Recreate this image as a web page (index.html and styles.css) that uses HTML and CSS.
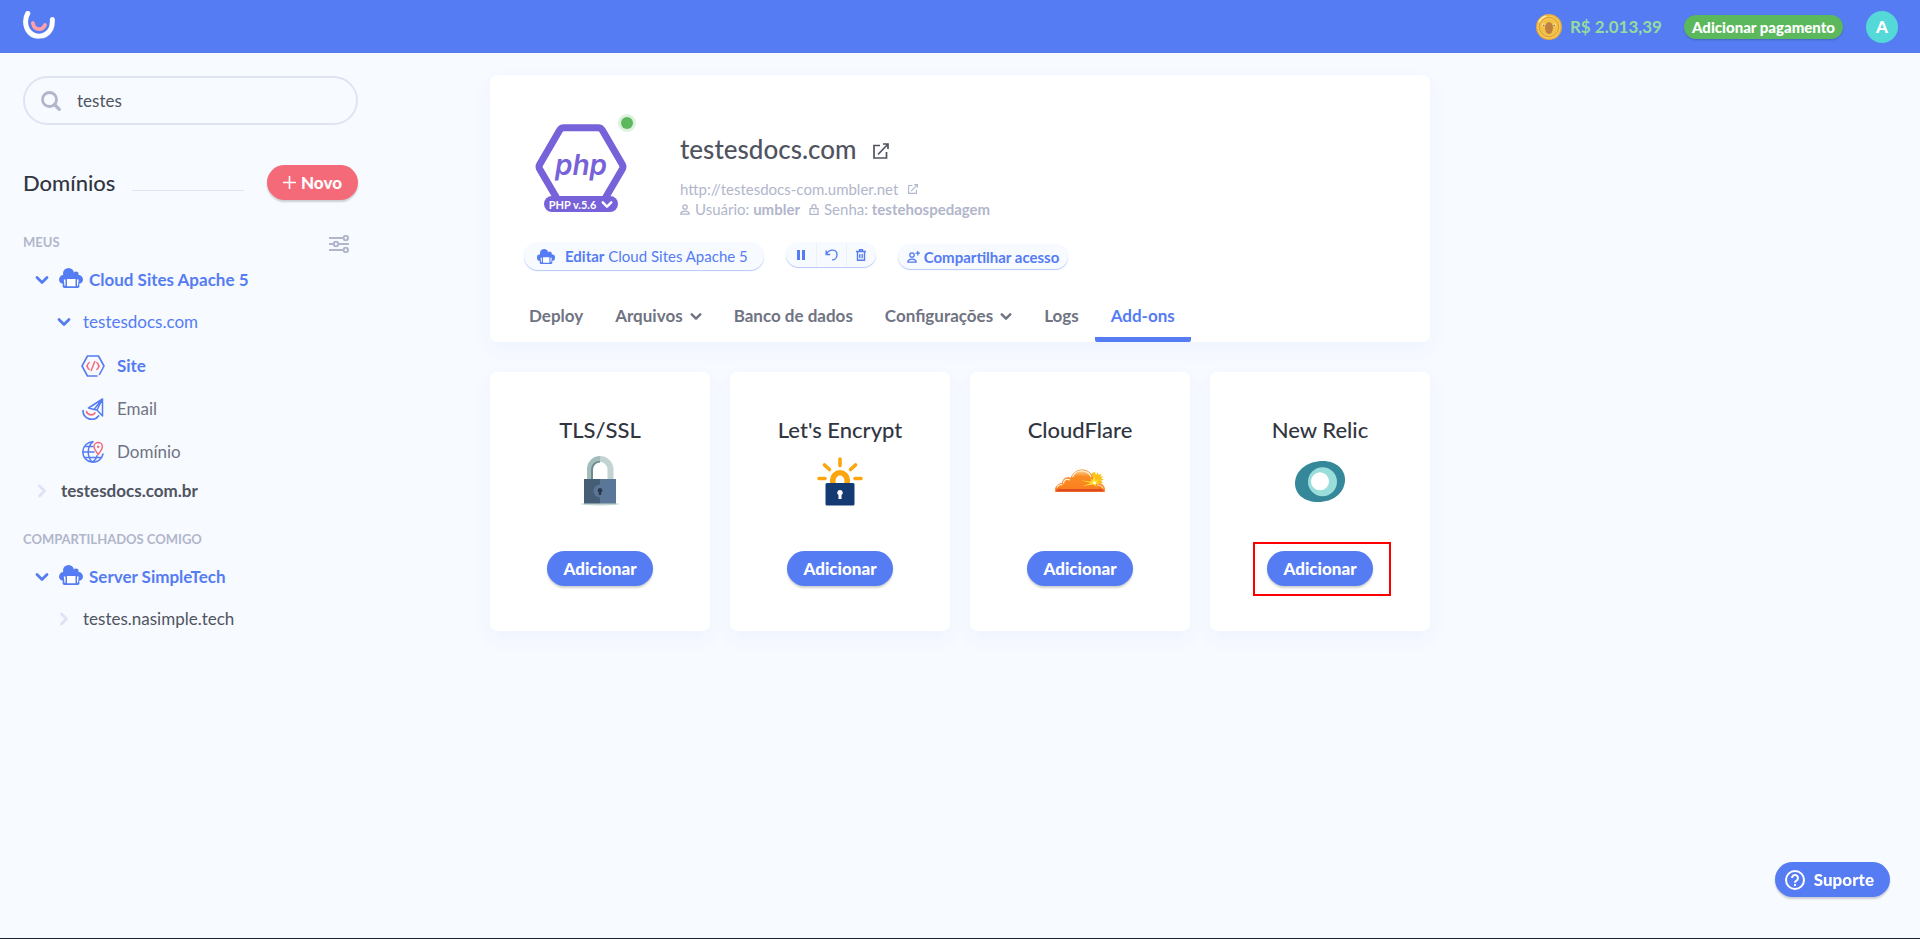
FILE: index.html
```html
<!DOCTYPE html>
<html lang="pt-BR">
<head>
    <meta charset="UTF-8">
    <meta name="viewport" content="width=device-width, initial-scale=1.0">
    <title>testesdocs.com - Add-ons</title>

    <link rel="stylesheet" href="styles.css">
</head>
<body>

    <!-- icones usados mais de uma vez -->
    <svg class="sprite" aria-hidden="true">
        <symbol id="ic-down" viewBox="0 0 14 10">
            <path d="M2 2.500l5 5 5-5" fill="none" stroke="currentColor" stroke-width="2.800" stroke-linecap="round" stroke-linejoin="round"/>
        </symbol>
        <symbol id="ic-right" viewBox="0 0 10 14">
            <path d="M2.500 2l5 5-5 5" fill="none" stroke="currentColor" stroke-width="2.800" stroke-linecap="round" stroke-linejoin="round"/>
        </symbol>
        <symbol id="ic-server" viewBox="0 0 24 20">
            <g fill="currentColor">
                <circle cx="9.500" cy="5.500" r="5.500"/>
                <circle cx="17" cy="6" r="2.600"/>
                <circle cx="4.400" cy="11.500" r="4.400"/>
                <circle cx="19.600" cy="11.500" r="4.400"/>
                <path d="M4 7h16v8.500L20.500 18a2 2 0 0 1-2 2h-13a2 2 0 0 1-2-2L4 15.500z"/>
            </g>
            <path fill="#fff" d="M8 11h8.500v7.300H8zM4.800 11.500h1.700v6.300H5.500zM18 11.500h1.700l-.7 6.300h-1z"/>
        </symbol>
        <symbol id="ic-external" viewBox="0 0 16 16">
            <path d="M7 2.500H1v12.500h12.500V9M5 11.500L14.600 1.500M10 1h5v5" fill="none" stroke="currentColor" stroke-width="1.700"/>
        </symbol>
    </svg>

    <header class="topbar">
        <a class="logo" href="#" aria-label="Umbler">
            <svg width="32" height="28" viewBox="0 0 32 28">
                <path d="M4.800 2.400C2 7 1.900 13.500 4.200 18c5 9.600 18.500 9.400 23.600 0 1.400-3 1.700-6 1.500-9.500" fill="none" stroke="#fff" stroke-width="5" stroke-linecap="round"/>
                <path d="M9.800 12c.8 4.400 3.400 6.200 6.400 6.200 2.600 0 4.500-1.300 5.800-4.200" fill="none" stroke="#ffa0a8" stroke-width="3.800" stroke-linecap="round"/>
            </svg>
        </a>
        <div class="account">
            <svg class="coin" width="26" height="26" viewBox="0 0 26 26">
                <circle cx="13" cy="13" r="13" fill="#e8ac3c"/>
                <circle cx="13" cy="13" r="11.500" fill="#f7cf57"/>
                <circle cx="13" cy="13" r="9.800" fill="#f2c14a" stroke="#d99a38" stroke-width="1"/>
                <path d="M3 8a11.500 11.500 0 0 1 7-6" fill="none" stroke="#fff0b0" stroke-width="1.500"/>
                <ellipse cx="13" cy="14" rx="4" ry="6" fill="#bf8140"/>
                <circle cx="7.500" cy="11" r="1.400" fill="#fff0b0"/><circle cx="18.500" cy="11" r="1.400" fill="#fff0b0"/>
                <circle cx="7.800" cy="11.400" r=".8" fill="#9a6430"/><circle cx="18.200" cy="11.400" r=".8" fill="#9a6430"/>
            </svg>
            <span class="balance">R$ 2.013,39</span>
            <button class="btn-payment" type="button">Adicionar pagamento</button>
            <button class="avatar" type="button">A</button>
        </div>
    </header>

    <div class="page">

        <aside class="sidebar">
            <div class="search">
                <svg width="20" height="20" viewBox="0 0 20 20">
                    <circle cx="8.500" cy="8.500" r="7" fill="none" stroke="#b1b6cb" stroke-width="2.800"/>
                    <path d="M13.500 13.500l4.800 4.800" stroke="#b1b6cb" stroke-width="3.200" stroke-linecap="round"/>
                </svg>
                <input type="text" value="testes" aria-label="Buscar">
            </div>

            <div class="domains-head">
                <h2>Domínios</h2>
                <span class="line"></span>
                <button class="btn btn-new" type="button">
                    <svg width="13" height="13" viewBox="0 0 13 13"><path d="M6.500 0v13M0 6.500h13" stroke="#fff" stroke-width="1.600"/></svg>
                    Novo
                </button>
            </div>

            <section class="group">
                <div class="group-head">
                    <h3>MEUS</h3>
                    <button class="btn-filter" type="button" aria-label="Filtrar">
                        <svg width="20" height="18" viewBox="0 0 20 18" fill="none" stroke="#b1b6cb" stroke-width="2">
                            <path d="M0 3h14M0 9h4.500M9.500 9H20M0 15h14"/>
                            <circle cx="16.800" cy="3" r="2.200"/><circle cx="7" cy="9" r="2.200"/><circle cx="16.800" cy="15" r="2.200"/>
                        </svg>
                    </button>
                </div>
                <nav>
                    <a class="row server" href="#">
                        <svg class="arrow" width="14" height="10"><use href="#ic-down"/></svg>
                        <svg class="cloud" width="24" height="20"><use href="#ic-server"/></svg>
                        Cloud Sites Apache 5
                    </a>
                    <a class="row site open" href="#">
                        <svg class="arrow" width="14" height="10"><use href="#ic-down"/></svg>
                        testesdocs.com
                    </a>
                    <div class="services">
                        <a class="row service active" href="#">
                            <svg width="24" height="22" viewBox="0 0 24 22" fill="none" stroke-linecap="round" stroke-linejoin="round">
                                <path d="M16 21H6.500L1 11 6.500 1h11L23 11l-4.500 8.500" stroke="#557cf2" stroke-width="1.600"/>
                                <path d="M8.200 7.600C6 8.500 7.500 10 5.800 11c1.700 1 .2 2.500 2.400 3.400M15.800 7.600c2.200.9.7 2.400 2.400 3.400-1.700 1-.2 2.500-2.400 3.400M13.800 6.500L10.200 15.500" stroke="#f56a79" stroke-width="1.500"/>
                            </svg>
                            Site
                        </a>
                        <a class="row service" href="#">
                            <svg width="24" height="22" viewBox="0 0 24 22" fill="none" stroke-linecap="round" stroke-linejoin="round">
                                <path d="M21.500 1L7.500 10l5.500 1.500L21.500 1l-5.500 11 5.500 6zM13 11.500l3 .5" stroke="#557cf2" stroke-width="1.500"/>
                                <path d="M2 12.500c0 9 11 11.500 15.500 5.500" stroke="#557cf2" stroke-width="1.700"/>
                                <path d="M5.500 13.500c1.500 4.500 6.500 4 8.500 1.500" stroke="#f56a79" stroke-width="1.700"/>
                            </svg>
                            Email
                        </a>
                        <a class="row service" href="#">
                            <svg width="24" height="22" viewBox="0 0 24 22" fill="none" stroke-linecap="round" stroke-linejoin="round">
                                <path d="M12 .8A10.200 10.200 0 1 0 22 13M12 .8C6 5 5.500 16 11.500 21.200M11.500 21.200c3-2 4-4.200 4.500-6.500M1.800 11H13M3.300 5.500H12M3.500 16.500h16" stroke="#557cf2" stroke-width="1.500"/>
                                <path d="M17.200 13.500c-2-3-4.200-5-4.200-7.800a4.200 4.200 0 0 1 8.400 0c0 2.800-2.200 4.800-4.200 7.800z" stroke="#f56a79" stroke-width="1.500"/>
                                <circle cx="17.200" cy="5.700" r="1.200" fill="#f56a79"/>
                            </svg>
                            Domínio
                        </a>
                    </div>
                    <a class="row domain" href="#">
                        <svg class="arrow" width="10" height="14"><use href="#ic-right"/></svg>
                        testesdocs.com.br
                    </a>
                </nav>
            </section>

            <section class="group">
                <div class="group-head">
                    <h3>COMPARTILHADOS COMIGO</h3>
                </div>
                <nav>
                    <a class="row server" href="#">
                        <svg class="arrow" width="14" height="10"><use href="#ic-down"/></svg>
                        <svg class="cloud" width="24" height="20"><use href="#ic-server"/></svg>
                        Server SimpleTech
                    </a>
                    <a class="row site" href="#">
                        <svg class="arrow" width="10" height="14"><use href="#ic-right"/></svg>
                        testes.nasimple.tech
                    </a>
                </nav>
            </section>
        </aside>

        <main class="content">

            <section class="panel">
                <div class="site-info">
                    <div class="platform">
                        <svg width="92" height="86" viewBox="0 0 92 86">
                            <path d="M29 3.700h34a5 5 0 0 1 4.400 2.500l19.800 34a5 5 0 0 1 0 5L67.400 79a5 5 0 0 1-4.400 2.500H29a5 5 0 0 1-4.400-2.500L4.800 45.200a5 5 0 0 1 0-5l19.800-34A5 5 0 0 1 29 3.700z" fill="none" stroke="#7762d9" stroke-width="7"/>
                            <text class="php" x="46" y="51" text-anchor="middle">php</text>
                        </svg>
                        <span class="status"></span>
                        <button class="version" type="button">
                            PHP v.5.6
                            <svg width="12" height="9"><use href="#ic-down"/></svg>
                        </button>
                    </div>
                    <div class="details">
                        <h1>
                            testesdocs.com
                            <a href="#" aria-label="Abrir site"><svg width="16" height="16"><use href="#ic-external"/></svg></a>
                        </h1>
                        <a class="url" href="#">
                            http://testesdocs-com.umbler.net
                            <svg width="10" height="10"><use href="#ic-external"/></svg>
                        </a>
                        <p class="credentials">
                            <svg width="10" height="11" viewBox="0 0 10 11" fill="none" stroke="currentColor" stroke-width="1.300"><circle cx="5" cy="3" r="2.200"/><path d="M.8 10.200c0-4 8.400-4 8.400 0z"/></svg>
                            <span>Usuário: <b>umbler</b></span>
                            <svg class="lock" width="10" height="11" viewBox="0 0 10 11" fill="none" stroke="currentColor" stroke-width="1.300"><path d="M1 4.700h8v5.600H1zM3 4.500V2.700a2 2 0 0 1 4 0v1.800M5 6.700v1.500"/></svg>
                            <span>Senha: <b>testehospedagem</b></span>
                        </p>
                    </div>
                </div>

                <div class="actions">
                    <button class="pill edit" type="button">
                        <svg width="18" height="15"><use href="#ic-server"/></svg>
                        <span><b>Editar</b> Cloud Sites Apache 5</span>
                    </button>
                    <div class="pill tools">
                        <button type="button" aria-label="Pausar">
                            <svg width="8" height="10" viewBox="0 0 8 10"><path d="M0 0h3v10H0zM5 0h3v10H5z" fill="currentColor"/></svg>
                        </button>
                        <button type="button" aria-label="Reiniciar">
                            <svg width="13" height="12" viewBox="0 0 13 12" fill="none" stroke="currentColor" stroke-width="1.400"><path d="M1.200 1.500v4h4M1.500 5.300C4-.5 12-.2 12 5.700c0 3-2.200 5.200-5 5.200"/></svg>
                        </button>
                        <button type="button" aria-label="Excluir">
                            <svg width="10" height="12" viewBox="0 0 10 12" fill="none" stroke="currentColor" stroke-width="1.400"><path d="M0 2.500h10M3.500 2V.8h3V2M1.500 3v8.300h7V3M3.800 5v4.300M6.200 5v4.300"/></svg>
                        </button>
                    </div>
                    <button class="pill share" type="button">
                        <svg width="13" height="12" viewBox="0 0 13 12" fill="none" stroke="currentColor" stroke-width="1.300"><circle cx="5" cy="4" r="2.200"/><path d="M.8 11.200c0-4.200 8.400-4.200 8.400 0zM10.800 0v4.400M8.600 2.200H13"/></svg>
                        Compartilhar acesso
                    </button>
                </div>

                <nav class="tabs">
                    <a href="#">Deploy</a>
                    <a href="#">Arquivos <svg width="12" height="9"><use href="#ic-down"/></svg></a>
                    <a href="#">Banco de dados</a>
                    <a href="#">Configurações <svg width="12" height="9"><use href="#ic-down"/></svg></a>
                    <a href="#">Logs</a>
                    <a class="active" href="#">Add-ons</a>
                </nav>
            </section>

            <section class="addons">
                <article class="card">
                    <h2>TLS/SSL</h2>
                    <svg width="50" height="50" viewBox="0 0 50 50">
                        <ellipse cx="25" cy="48" rx="19" ry="1.500" fill="#c3d3d2"/>
                        <path d="M12 24V13.500A13 13 0 0 1 25 0v6a7.500 7.500 0 0 0-7.500 7.500V24z" fill="#a3bcbc"/>
                        <path d="M16 24V13.500A8.500 8.500 0 0 1 25 5v1.500A7 7 0 0 0 18 14v10z" fill="#6d8a8c"/>
                        <path d="M38.500 24V13.500A13.500 13.500 0 0 0 25 0v6a7.500 7.500 0 0 1 7.500 7.500V24z" fill="#c3d3d2"/>
                        <path d="M9 23h16v24.500H9z" fill="#465d76"/>
                        <path d="M25 23h16v24.500H25z" fill="#5b7797"/>
                        <path d="M25 28.500a6.500 6.500 0 0 0 0 13z" fill="#5b7797"/>
                        <path d="M25 32a2.500 2.500 0 0 1 1.200 4.600V39h-2.400v-2.400A2.500 2.500 0 0 1 25 32z" fill="#29394d"/>
                    </svg>
                    <button class="btn" type="button">Adicionar</button>
                </article>
                <article class="card">
                    <h2>Let's Encrypt</h2>
                    <svg width="50" height="50" viewBox="0 0 50 50">
                        <path d="M17.800 28v-4a7.200 7.200 0 0 1 14.400 0v4" fill="none" stroke="#fba50e" stroke-width="5.600"/>
                        <path d="M25 3v6.500M9.500 9l5 4.500M40.500 9l-5 4.500M4 22.500h6M40 22.500h6" stroke="#fba50e" stroke-width="3.600" stroke-linecap="round"/>
                        <rect x="10.500" y="27" width="29" height="22.500" rx="1.500" fill="#143a72"/>
                        <path d="M25 34a2.700 2.700 0 0 1 1.500 5v4h-3v-4A2.700 2.700 0 0 1 25 34z" fill="#fff"/>
                    </svg>
                    <button class="btn" type="button">Adicionar</button>
                </article>
                <article class="card">
                    <h2>CloudFlare</h2>
                    <svg width="50" height="50" viewBox="0 0 50 50">
                        <defs>
                            <linearGradient id="cf-cloud" x1="0" y1="0" x2="0" y2="1">
                                <stop offset="0" stop-color="#ffd9a0"/><stop offset=".3" stop-color="#fb8c24"/><stop offset="1" stop-color="#fb7d1d"/>
                            </linearGradient>
                        </defs>
                        <path d="M40 16l1 3 2-3 .5 3 3-1.500-1 3 3 0-2.500 2 3 1-3 1 2 2.500H34V19l3-1.500 1-1z" fill="#fcc21b"/>
                        <path d="M.5 35.500c-.5-5 2.500-8 7-8 0-5 4.500-7 8.500-5 1.500-6 7-9 12-8.500 6 .5 9 4.500 9.500 8.500.8 2 1.500 4.500 4.500 5 5-1 8 3 7.500 8z" fill="url(#cf-cloud)" stroke="#fb8424" stroke-width="1"/>
                        <path d="M8.500 27.500c0-4 3.500-5 6.500-3.500M17.500 21c2-5 6.500-6.500 10.500-6 4 .4 7 3 8 6" fill="none" stroke="#fff0d2" stroke-width="1.300"/>
                        <path d="M2 31.500c1-2.500 3.500-3 5.500-2.700M42 29c3 0 5 1 6 3.500" fill="none" stroke="#ffe2b5" stroke-width="1.200"/>
                        <path d="M1 35.500c1-4 4-2.500 8-2.500h32c4 0 6-1.500 8 2.500z" fill="#de4a22"/>
                        <path d="M39.500 19.500l.8 5.500 3.700-1.500-2.500 3 5 1-6 .5 1.500 3-3.500-2.500-11 1.500 8.500-3-10-2.500 10.500 1-.8-3.500 2 2z" fill="#ffe22d"/>
                        <circle cx="39.500" cy="27" r="1.400" fill="#fff"/>
                    </svg>
                    <button class="btn" type="button">Adicionar</button>
                </article>
                <article class="card">
                    <h2>New Relic</h2>
                    <svg width="50" height="50" viewBox="0 0 50 50">
                        <path d="M28 5c13 0 22 8.500 22 18.500C50 37 38 46 23 46 9 46 0 38 0 27.500 0 14 13 5 28 5z" fill="#35879a"/>
                        <circle cx="27.500" cy="25.700" r="14.500" fill="#9adedb"/>
                        <circle cx="25" cy="25.300" r="9" fill="#fff"/>
                    </svg>
                    <div class="highlighted">
                        <button class="btn" type="button">Adicionar</button>
                        <span class="frame"></span>
                    </div>
                </article>
            </section>

        </main>

    </div>

    <button class="btn support" type="button">
        <svg width="20" height="20" viewBox="0 0 20 20" fill="none" stroke="#fff" stroke-width="2">
            <circle cx="10" cy="10" r="9"/>
            <path d="M7 8a3 3 0 1 1 4.500 2.600c-1 .6-1.500 1-1.500 2.100"/>
            <path d="M10 14v2"/>
        </svg>
        Suporte
    </button>

</body>
</html>
```
FILE: styles.css
```css
*{
  box-sizing: border-box;
}

body{
  margin: 0;
  min-height: 100vh;
  font-family: Lato, 'Open Sans', sans-serif;
  font-size: 17px;
  line-height: 20px;
  color: #50545f;
  background: #f7faff;
  border-bottom: 1px solid #1b2130;
}

h1, h2, h3, p{
  margin: 0;
}

a{
  color: inherit;
  text-decoration: none;
}

button{
  font-family: inherit;
  border: none;
  padding: 0;
  cursor: pointer;
}

svg{
  flex: none;
}

.sprite{
  position: absolute;
  width: 0;
  height: 0;
}

/* topo */
.topbar{
  display: flex;
  justify-content: space-between;
  align-items: center;
  height: 53px;
  padding: 0 22px 0 23px;
  background: #557cf2;
}

.logo{
  padding-bottom: 3px;
}

.logo svg{
  display: block;
}

.account{
  display: flex;
  align-items: center;
}

.balance{
  margin: 0 22px 0 8px;
  font-weight: 700;
  color: #93dba0;
}

.btn-payment{
  height: 24px;
  padding: 0 8px;
  border-radius: 12px;
  background: #5cb85c;
  color: #fff;
  font-size: 15px;
  font-weight: 900;
  box-shadow: 0 1px 2px rgba(0, 0, 0, .2);
}

.avatar{
  width: 32px;
  height: 32px;
  margin-left: 23px;
  border-radius: 50%;
  background: #55d8d8;
  color: #fff;
  font-size: 17px;
  font-weight: 900;
}

.page{
  display: grid;
  grid-template-columns: minmax(358px, 1fr) minmax(0, 940px) 1fr;
  padding-top: 22px;
}

.btn{
  display: inline-flex;
  align-items: center;
  justify-content: center;
  height: 35px;
  padding: 0 16px;
  border-radius: 18px;
  background: #557cf2;
  color: #fff;
  font-size: 17px;
  font-weight: 900;
  box-shadow: 0 2px 2px rgba(0, 0, 0, .18);
}

/* menu lateral */
.sidebar{
  width: 358px;
  padding: 1px 0 0 23px;
}

.search{
  display: flex;
  align-items: center;
  gap: 14px;
  height: 49px;
  padding: 0 16px;
  border: 2px solid #dfe4f3;
  border-radius: 25px;
}

.search input{
  flex: 1;
  min-width: 0;
  border: none;
  outline: none;
  background: none;
  font-family: inherit;
  font-size: 17px;
  color: #50545f;
}

.domains-head{
  display: flex;
  align-items: center;
  margin-top: 40px;
}

.domains-head h2{
  font-size: 22px;
  font-weight: 500;
  color: #31353f;
}

.domains-head .line{
  flex: 1;
  height: 1px;
  margin: 16px 23px 0 17px;
  background: #dfe4f3;
}

.btn-new{
  gap: 5px;
  background: #f56a79;
}

.group{
  margin-top: 22px;
}

.domains-head + .group{
  margin-top: 34px;
}

.group-head{
  display: flex;
  justify-content: space-between;
  height: 16px;
  margin-bottom: 10px;
  padding-right: 9px;
}

.group-head h3{
  font-size: 13px;
  line-height: 16px;
  font-weight: 700;
  color: #b1b6cb;
}

.btn-filter{
  height: 22px;
  background: none;
}

.row{
  display: flex;
  align-items: center;
  height: 40px;
}

.row .arrow{
  width: 14px;
}

.server, .domain{
  padding-left: 12px;
  font-weight: 700;
}

.domain{
  height: 36px;
}

.server, .open, .service.active{
  color: #557cf2;
}

.server .cloud{
  margin: 0 6px 4px 10px;
}

.domain, .site{
  gap: 12px;
}

.site{
  height: 44px;
  padding-left: 34px;
}

.domain .arrow, .site:not(.open) .arrow{
  color: #dfe2f5;
}

.service{
  gap: 12px;
  height: 43px;
  padding-left: 58px;
  color: #6f7382;
}

.service.active{
  font-weight: 700;
}

/* painel do site */
.panel{
  display: flex;
  flex-direction: column;
  border-radius: 7px;
  background: #fff;
  box-shadow: 0 8px 20px rgba(85, 124, 242, .05);
}

.site-info{
  display: flex;
  gap: 53px;
  padding: 49px 45px 0;
}

.platform{
  position: relative;
  width: 92px;
  height: 88px;
}

.php{
  font-family: Inter, sans-serif;
  font-size: 28px;
  font-style: italic;
  font-weight: 600;
  fill: #7762d9;
}

.status{
  position: absolute;
  top: -7px;
  right: -6px;
  width: 12px;
  height: 12px;
  border-radius: 50%;
  background: #5cb85c;
  box-shadow: 0 0 0 3px #def1de;
}

.version{
  position: absolute;
  bottom: 0;
  left: 9px;
  display: flex;
  align-items: center;
  justify-content: center;
  gap: 5px;
  width: 74px;
  height: 16px;
  border-radius: 8px;
  background: #7762d9;
  color: #fff;
  font-size: 11px;
  font-weight: 700;
}

.details{
  padding-top: 10px;
  font-size: 15px;
  color: #b1b6cb;
}

.details h1{
  display: flex;
  align-items: center;
  gap: 16px;
  margin-bottom: 15px;
  font-size: 26px;
  line-height: 30px;
  font-weight: 500;
  color: #50545f;
}

.url{
  display: flex;
  align-items: center;
  gap: 10px;
}

.credentials{
  display: flex;
  align-items: center;
  gap: 5px;
}

.credentials .lock{
  margin-left: 4px;
}

.actions{
  display: flex;
  align-items: flex-start;
  gap: 22px;
  margin-top: 23px;
  padding: 0 34px;
}

.pill{
  display: flex;
  align-items: center;
  height: 25px;
  border-radius: 14px;
  background: #f7faff;
  color: #557cf2;
  font-size: 15px;
  box-shadow: 0 1px 1px #b7c8fa;
}

.edit{
  gap: 10px;
  height: 28px;
  padding: 0 16px 0 13px;
}

.tools button{
  display: flex;
  align-items: center;
  justify-content: center;
  width: 30px;
  height: 24px;
  background: none;
  color: inherit;
}

.tools button + button{
  border-left: 1px solid #edf1fc;
}

.share{
  gap: 4px;
  margin-top: 2px;
  padding: 0 9px;
  font-weight: 700;
}

.tabs{
  display: flex;
  margin-top: 20px;
  padding: 0 23px;
  font-weight: 700;
  color: #6f7382;
}

.tabs a{
  display: flex;
  align-items: center;
  gap: 7px;
  height: 52px;
  padding: 5px 16px 0;
  border-bottom: 5px solid transparent;
}

.tabs .active{
  color: #557cf2;
  border-bottom-color: #557cf2;
  border-radius: 2px;
}

/* cards */
.addons{
  display: grid;
  grid-template-columns: repeat(4, 1fr);
  gap: 20px;
  margin-top: 30px;
}

.card{
  display: flex;
  flex-direction: column;
  align-items: center;
  padding: 44px 20px 45px;
  border-radius: 7px;
  background: #fff;
  box-shadow: 0 8px 20px rgba(85, 124, 242, .05);
}

.card h2{
  margin-bottom: 12px;
  font-size: 22px;
  line-height: 28px;
  font-weight: 500;
  color: #31353f;
}

.card > svg{
  margin-bottom: 45px;
}

.highlighted{
  position: relative;
  display: flex;
}

/* moldura vermelha em volta do botao */
.frame{
  position: absolute;
  inset: -9px -18px -10px -14px;
  border: 2px solid #f00;
  pointer-events: none;
}

.support{
  position: fixed;
  right: 30px;
  bottom: 42px;
  gap: 9px;
  padding: 0 16px 0 10px;
}
```
